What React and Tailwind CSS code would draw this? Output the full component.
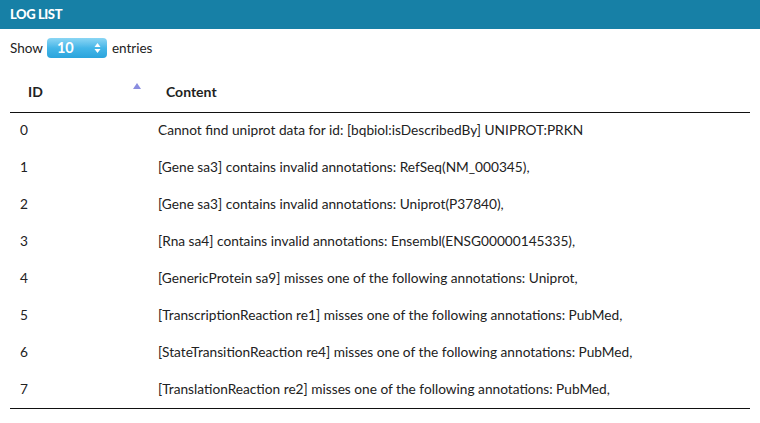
import React from "react";

const rows = [
  ["0", "Cannot find uniprot data for id: [bqbiol:isDescribedBy] UNIPROT:PRKN"],
  ["1", "[Gene sa3] contains invalid annotations: RefSeq(NM_000345),"],
  ["2", "[Gene sa3] contains invalid annotations: Uniprot(P37840),"],
  ["3", "[Rna sa4] contains invalid annotations: Ensembl(ENSG00000145335),"],
  ["4", "[GenericProtein sa9] misses one of the following annotations: Uniprot,"],
  ["5", "[TranscriptionReaction re1] misses one of the following annotations: PubMed,"],
  ["6", "[StateTransitionReaction re4] misses one of the following annotations: PubMed,"],
  ["7", "[TranslationReaction re2] misses one of the following annotations: PubMed,"],
];

export default function App() {
  return (
    <div className="w-[760px] h-[423px] bg-white text-[#222] overflow-hidden" style={{ fontFamily: "Lato, 'Liberation Sans', sans-serif" }}>
      <div className="h-[29px] bg-[#1780a6] flex items-center pl-[10px]">
        <span className="text-white font-black text-[13px] tracking-[-0.4px]">LOG LIST</span>
      </div>
      <div className="flex items-center h-[37px] pl-[10px] text-[13.5px] pt-[1px]">
        <span>Show</span>
        <div className="ml-[4px] mr-[5px] w-[60px] h-[20px] rounded-[4px] bg-gradient-to-b from-[#8ad6f4] via-[#44b6e8] to-[#2aa4dc] flex items-center pl-[10px] pr-[6px] justify-between">
          <span className="text-white font-bold text-[14.5px]">10</span>
          <svg width="7" height="12" viewBox="0 0 7 12">
            <path d="M3.5 1 L6.5 5 L0.5 5 Z" fill="white" />
            <path d="M3.5 11 L6.5 7 L0.5 7 Z" fill="white" />
          </svg>
        </div>
        <span>entries</span>
      </div>
      <div className="mx-[10px] mt-[6px]">
        <table className="w-[740px] border-collapse text-[13.7px]">
          <thead>
            <tr className="h-[40px] border-b border-[#111]">
              <th className="w-[138px] text-left font-bold text-[14px] pl-[18px] relative">
                ID
                <svg className="absolute right-[7px] top-[11px]" width="8" height="6" viewBox="0 0 8 6">
                  <path d="M4 0 L8 6 L0 6 Z" fill="#8a8de0" />
                </svg>
              </th>
              <th className="text-left font-bold text-[14px] pl-[18px]">Content</th>
            </tr>
          </thead>
          <tbody>
            {rows.map(([id, c], i) => (
              <tr key={id} className={"h-[37px]" + (i === rows.length - 1 ? " border-b border-[#111]" : "")}>
                <td className="pl-[10px]">{id}</td>
                <td className="pl-[10px]">{c}</td>
              </tr>
            ))}
          </tbody>
        </table>
      </div>
    </div>
  );
}
